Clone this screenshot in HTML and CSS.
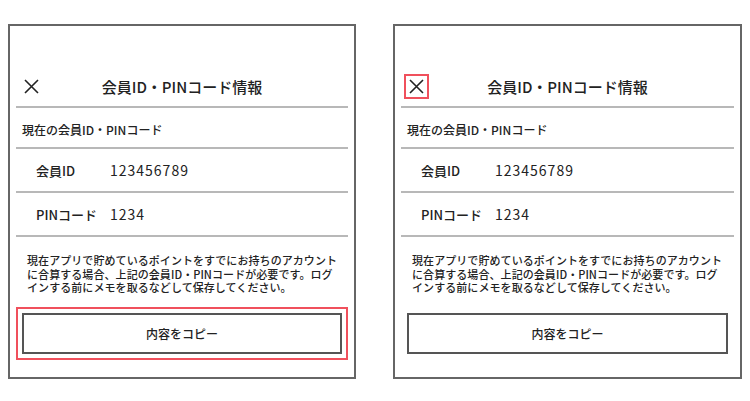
FILE: index.html
```html
<!DOCTYPE html>
<html lang="ja">
<head>
<meta charset="utf-8">
<title>会員ID・PINコード情報</title>
<link rel="stylesheet" href="styles.css">
</head>
<body>
<main class="screens">
  <section class="panel">
    <header class="head">
      <button class="close" aria-label="閉じる">
        <svg width="15" height="15" viewBox="0 0 15 15"><path d="M1 1L14 14M14 1L1 14" stroke="#222" stroke-width="1.6" fill="none"/></svg>
      </button>
      <h1 class="title">会員ID・PINコード情報</h1>
      <span></span>
    </header>
    <div class="sub">現在の会員ID・PINコード</div>
    <div class="row"><span class="lbl">会員ID</span><span class="val">123456789</span></div>
    <div class="row"><span class="lbl">PINコード</span><span class="val">1234</span></div>
    <p class="note">現在アプリで貯めているポイントをすでにお持ちのアカウント<br>に合算する場合、上記の会員ID・PINコードが必要です。ログ<br>インする前にメモを取るなどして保存してください。</p>
    <div class="btnwrap hl"><button class="copy">内容をコピー</button></div>
  </section>
  <section class="panel panel-r">
    <header class="head">
      <button class="close hl" aria-label="閉じる">
        <svg width="15" height="15" viewBox="0 0 15 15"><path d="M1 1L14 14M14 1L1 14" stroke="#222" stroke-width="1.6" fill="none"/></svg>
      </button>
      <h1 class="title">会員ID・PINコード情報</h1>
      <span></span>
    </header>
    <div class="sub">現在の会員ID・PINコード</div>
    <div class="row"><span class="lbl">会員ID</span><span class="val">123456789</span></div>
    <div class="row"><span class="lbl">PINコード</span><span class="val">1234</span></div>
    <p class="note">現在アプリで貯めているポイントをすでにお持ちのアカウント<br>に合算する場合、上記の会員ID・PINコードが必要です。ログ<br>インする前にメモを取るなどして保存してください。</p>
    <div class="btnwrap"><button class="copy">内容をコピー</button></div>
  </section>
</main>
</body>
</html>
```
FILE: styles.css
```css
* { box-sizing: border-box; }
html, body { margin: 0; background: #fff; }
body {
  font-family: "Noto Sans CJK JP", "Noto Sans", sans-serif;
  color: #222;
}
.screens {
  display: flex;
  gap: 37px;
  padding: 24px 0 0 8px;
}
.panel {
  width: 348px;
  height: 355px;
  border: 2px solid #666;
  display: flex;
  flex-direction: column;
}
.panel-r { width: 349px; }
.head {
  margin: 0 6px;
  padding: 48px 3px 7px;
  border-bottom: 2px solid #b8b8b8;
  display: grid;
  grid-template-columns: 25px 1fr 25px;
  align-items: center;
}
.close {
  width: 25px;
  height: 25px;
  padding: 0;
  margin: 0;
  border: 2px solid transparent;
  background: none;
  display: flex;
  align-items: center;
  justify-content: center;
}
.close.hl { border-color: #f0505c; }
.title {
  margin: 0;
  text-align: center;
  font-size: 15px;
  font-weight: 500;
  line-height: 20px;
}
.sub {
  margin: 0 6px;
  padding: 13px 6px 9px;
  border-bottom: 2px solid #b8b8b8;
  font-size: 12px;
  font-weight: 500;
  line-height: 17px;
}
.row {
  margin: 0 6px;
  padding-left: 20px;
  height: 44px;
  border-bottom: 2px solid #b8b8b8;
  display: flex;
  align-items: center;
  font-size: 13px;
  font-weight: 500;
}
.lbl { width: 74px; }
.val { letter-spacing: 1px; font-size: 14px; font-weight: 400; }
.note {
  margin: 0;
  padding: 17px 17px 0;
  font-size: 11px;
  font-weight: 500;
  line-height: 13.5px;
  letter-spacing: 0.07px;
  white-space: nowrap;
}
.btnwrap {
  margin: 12px 6px 0;
  padding: 4px;
  border: 2px solid transparent;
}
.btnwrap.hl { border-color: #f0505c; }
.copy {
  display: block;
  width: 100%;
  height: 41px;
  margin: 0;
  border: 2px solid #555;
  background: #fff;
  font-family: inherit;
  font-size: 12px;
  font-weight: 500;
  color: #222;
}
```
